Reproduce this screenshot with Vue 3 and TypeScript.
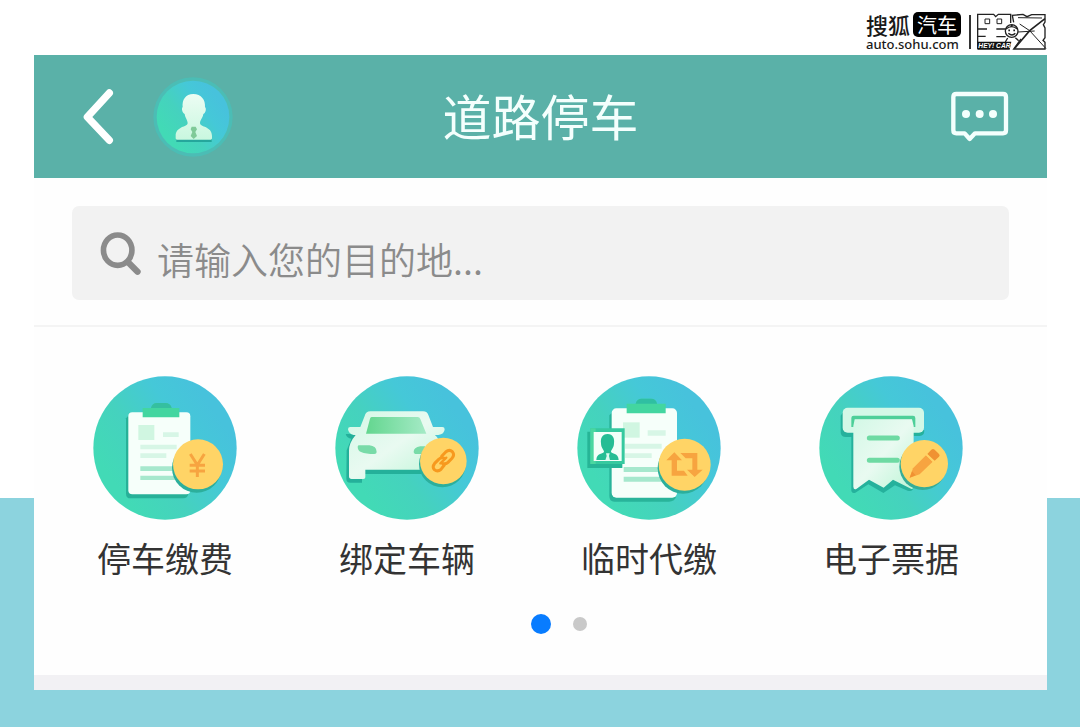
<script setup lang="ts">
import { ref } from 'vue'

type ServiceKind = 'pay' | 'bind' | 'proxy' | 'ticket'

interface Service {
  kind: ServiceKind
  label: string
  viewBox: string
}

const services: Service[] = [
  { kind: 'pay', label: '停车缴费', viewBox: '39 33 432 432' },
  { kind: 'bind', label: '绑定车辆', viewBox: '30 33 432 432' },
  { kind: 'proxy', label: '临时代缴', viewBox: '37 33 432 432' },
  { kind: 'ticket', label: '电子票据', viewBox: '42 33 432 432' },
]

const destination = ref('')
const activePage = ref(0)
</script>

<template>
  <div class="page">
    <svg class="defs" aria-hidden="true">
      <defs>
        <linearGradient id="disc" x1="0.15" y1="0.75" x2="0.85" y2="0.25">
          <stop offset="0" stop-color="#42dab6" />
          <stop offset="0.35" stop-color="#45d2be" />
          <stop offset="0.72" stop-color="#45c8d8" />
          <stop offset="1" stop-color="#47c2dc" />
        </linearGradient>
        <linearGradient id="mint" x1="0" y1="0" x2="0" y2="1">
          <stop offset="0" stop-color="#ecfdf3" />
          <stop offset="1" stop-color="#c9f7df" />
        </linearGradient>
        <linearGradient id="pale" x1="0" y1="0" x2="1" y2="1">
          <stop offset="0" stop-color="#d3f8e6" />
          <stop offset="0.5" stop-color="#e9faf1" />
          <stop offset="1" stop-color="#bdf5d6" />
        </linearGradient>
        <linearGradient id="glass" x1="0" y1="0" x2="1" y2="0">
          <stop offset="0" stop-color="#63d68f" />
          <stop offset="1" stop-color="#a5eac6" />
        </linearGradient>
      </defs>
    </svg>

    <div class="brand">
      <a class="sohu" href="#">
        <span class="sohu-name">搜狐<b class="sohu-auto">汽车</b></span>
        <span class="sohu-url">auto.sohu.com</span>
      </a>
      <span class="brand-rule"></span>
      <svg class="heycar" viewBox="354 20 210 117" role="img" aria-label="HEY! CAR">
        <g fill="none" stroke="#222" stroke-width="4">
          <path d="M356 132V27h48l6 7 8-7h37v26M356 71h28M356 93h24M412 71h28M412 94h28" />
          <path d="M378 41h14v14h-14zM414 41h14v14h-14z" stroke-width="3" />
          <path d="M464 51l-4-21 32-3 12 7 14-6h40v22l-5 8 5 10v29l-6 8 6 6v20H464l22-30" />
          <path d="M477 37l72 1M482 56l30 20 49 54M477 80l50-3" stroke-width="3" />
          <path d="M558 40l-46 36-46 54" stroke-width="5" />
          <circle cx="458" cy="77" r="19" fill="#fff" />
          <path d="M441 71q17-14 34 0M448 84q11 10 21 0M446 98l-7 12M469 97l10 9" />
          <path d="M448 75h5M463 75h5M456 64l4-6" stroke-width="5" />
        </g>
        <path d="M356 109h101l-5 24h-96z" fill="#111" />
        <text x="358" y="129" class="heycar-text">HEY! CAR</text>
      </svg>
    </div>

    <main class="card">
      <header class="bar">
        <div class="bar-side bar-start">
          <button class="icon-button" type="button" aria-label="返回">
            <svg class="back" viewBox="156 114 96 180">
              <path d="M238 132L172 204L238 274" fill="none" stroke="#fff" stroke-width="22" stroke-linecap="round" stroke-linejoin="round" />
            </svg>
          </button>
          <button class="icon-button" type="button" aria-label="个人中心">
            <svg class="avatar" viewBox="370 80 240 240">
              <circle cx="490" cy="200" r="119" fill="#4bbdb5" />
              <circle cx="490" cy="200" r="109" fill="url(#disc)" />
              <path d="M440 265h106v10H440z" fill="#25a79c" />
              <path d="M491 131c-24 0-34 18-32 39-5 5 0 19 6 21 2 13 8 17 9 27 0 13-36 9-36 39v7q0 4 4 4h101q4 0 4-4v-7c0-30-36-26-36-39 1-10 8-14 10-27 7-2 10-17 5-21 2-21-11-39-35-39z" fill="url(#mint)" />
              <path d="M486 229h12l4 8-5 8 5 12-10 9-9-9 5-12-5-8z" fill="#7fca98" />
            </svg>
          </button>
        </div>
        <h1 class="title">道路停车</h1>
        <div class="bar-side bar-end">
          <button class="icon-button" type="button" aria-label="消息">
            <svg class="chat" viewBox="64 65 174 153">
              <path d="M80 74H220Q229 74 229 83V183Q229 192 220 192H136L120 209L105 192H80Q71 192 71 183V83Q71 74 80 74Z" fill="none" stroke="#f4fffd" stroke-width="13" stroke-linejoin="round" />
              <g fill="#f4fffd">
                <circle cx="109" cy="134" r="12" />
                <circle cx="150" cy="134" r="12" />
                <circle cx="190" cy="134" r="12" />
              </g>
            </svg>
          </button>
        </div>
      </header>

      <form class="search-area" role="search" @submit.prevent>
        <label class="search">
          <svg class="lens" viewBox="120 102 126 136" aria-hidden="true">
            <ellipse cx="173" cy="160" rx="43" ry="46" fill="none" stroke="#8b8b8b" stroke-width="17" />
            <path d="M206 198L233 225" stroke="#8b8b8b" stroke-width="19" stroke-linecap="round" />
          </svg>
          <input v-model="destination" type="text" class="search-input" placeholder="请输入您的目的地..." aria-label="目的地" />
        </label>
      </form>

      <nav class="services" aria-label="停车服务">
        <a v-for="service in services" :key="service.kind" class="service" href="#">
          <svg class="service-icon" :viewBox="service.viewBox" aria-hidden="true">
            <template v-if="service.kind === 'pay'">
              <circle cx="255" cy="249" r="215" fill="url(#disc)" />
              <path d="M145 152l-7 8v226q0 14 14 14h158q12 0 15-13z" fill="#27b198" />
              <rect x="145" y="142" width="186" height="246" rx="12" fill="#f6fffa" />
              <path d="M188 157v-28h25q4-15 18-15h24q16 0 20 15h23v28z" fill="#43d6a0" />
              <path d="M213 129q4-15 18-15h24q16 0 20 15z" fill="#35bfa0" />
              <path d="M175 180h48v45h-48z" fill="#d0f6e1" />
              <path d="M249 202h47v14h-47zM181 239h109v14H181zM181 265h78v14h-78z" fill="#d7f6e6" />
              <path d="M181 304h110v14H181zM181 332h110v13H181z" fill="#a6e8cd" />
              <circle cx="350" cy="309" r="74" fill="#2caf9c" />
              <circle cx="354" cy="298" r="75" fill="#ffd466" />
              <path d="M331 267l21 33 21-33M352 300v36M329 301h46M329 318h46" fill="none" stroke="#f7a440" stroke-width="9" />
            </template>

            <template v-else-if="service.kind === 'bind'">
              <circle cx="246" cy="249" r="215" fill="url(#disc)" />
              <path d="M62 207q4 13 17 14l-14 35-1 85q0 12 12 12h35V327h220V210z" fill="#24b09a" />
              <path d="M119 153q3-14 17-14h158q13 0 17 13l13 34h28q7 0 7 7-1 15-19 17h-10q15 13 15 34v70H121v23q0 5-6 5H80q-8 0-8-8v-77q0-24 20-47h-6q-15-3-17-17 0-7 7-7h30z" fill="url(#pale)" />
              <path d="M140 156h138q6 0 8 6l18 44H123l12-45q1-5 5-5z" fill="url(#glass)" />
              <path d="M98 245q0-4 5-4h30q22 2 22 20 0 6-7 6-25 0-40-6-10-4-10-16zM266 260q0-12 20-16h14v23h-25q-9 0-9-7z" fill="#78dba8" />
              <circle cx="352" cy="297" r="70" fill="#2caf9c" />
              <circle cx="355" cy="288" r="70" fill="#ffd466" />
              <g fill="none" stroke="#f7991e" stroke-width="9" stroke-linecap="round">
                <path d="M350 274l12-13q11-9 20-1 8 10-1 20l-12 12q-8 7-17 3" />
                <path d="M358 300l-10 13q-10 9-20 1-7-9 1-19l12-12q8-7 17-3" />
                <path d="M346 295l18-17" stroke-width="7" />
              </g>
            </template>

            <template v-else-if="service.kind === 'proxy'">
              <circle cx="253" cy="249" r="215" fill="url(#disc)" />
              <path d="M141 144l-7 7v242q0 17 15 17h164q16 0 21-14z" fill="#29b49a" />
              <rect x="141" y="130" width="196" height="268" rx="14" fill="#f6fffa" />
              <path d="M186 145v-29h27q4-15 18-15h28q15 0 18 15h26v29z" fill="#43d6a0" />
              <path d="M213 116q4-15 18-15h28q15 0 18 15z" fill="#2fbfa2" />
              <path d="M175 172h50v46h-50z" fill="#d0f6e1" />
              <path d="M249 196h54v16h-54zM181 236h110v15H181zM181 265h80v14h-80z" fill="#d7f6e6" />
              <path d="M177 306h114v15H177zM177 335h114v15H177z" fill="#a6e8cd" />
              <path d="M68 200h105v109H68z" fill="#26b596" />
              <path d="M77 190h103v107H77z" fill="#36c99f" />
              <path d="M77 190h16v107H77z" fill="#4ad7a0" />
              <path d="M87 201h84v87H87z" fill="#f1fff8" />
              <path d="M129 207c-17 0-22 14-20 28 0 14 8 18 9 25-1 8-23 2-23 25h67c0-23-22-17-23-25 1-7 9-11 9-25 2-14-3-28-19-28z" fill="#25bd94" />
              <path d="M124 265h11l-2 8 3 13h-14l4-13z" fill="#d9fbee" />
              <circle cx="355" cy="310" r="76" fill="#2caf9c" />
              <circle cx="360" cy="299" r="78" fill="#ffd466" />
              <path d="M329 262l23 24h-15v31h21l11 15h-48v-46h-16zM347 264h51v50h16l-24 22-23-22h16v-34h-20z" fill="#f7a440" />
            </template>

            <template v-else>
              <circle cx="258" cy="249" r="215" fill="url(#disc)" />
              <path d="M113 143l-6 9v50q0 14 16 14h16v162q2 8 12 5l39-25 45 26 35-23 38 16q16 5 17-10V213h19q14 0 14-17z" fill="#25b19c" />
              <rect x="113" y="128" width="244" height="75" rx="15" fill="#d3f8e7" />
              <path d="M139 186v-27q0-7 7-7h178q7 0 7 7v27h-11v-22H150v22z" fill="#4dcf99" />
              <path d="M149 163h172l5 20v184q-3 8-11 3l-51-26-28 24-44-24-37 27q-9 5-10-6V183z" fill="url(#pale)" />
              <path d="M193 219h84M193 286h84" stroke="#6edaa3" stroke-width="15" stroke-linecap="round" />
              <circle cx="353" cy="305" r="70" fill="#36ad97" />
              <circle cx="358" cy="296" r="71" fill="#ffd466" />
              <path d="M314 338l10-28 39-39 20 19-39 38z" fill="#f7a440" />
              <path d="M314 338l7-19 11 12zM367 267l12-13q5-4 10 0l13 13q4 5 0 8l-13 12z" fill="#f09232" />
              <path d="M365 269l22 22" stroke="#ffd466" stroke-width="4" />
            </template>
          </svg>
          <span class="service-label">{{ service.label }}</span>
        </a>
      </nav>

      <div class="dots">
        <button
          v-for="page in 2"
          :key="page"
          type="button"
          class="dot"
          :class="{ active: activePage === page - 1 }"
          :aria-label="`第${page}页`"
          @click="activePage = page - 1"
        ></button>
      </div>
      <div class="section-gap"></div>
    </main>
  </div>
</template>

<style>
body {
  margin: 0;
}
</style>

<style scoped>
.page {
  box-sizing: border-box;
  min-height: 100vh;
  padding: 0 33px 37px 34px;
  background: linear-gradient(#fff 498px, #8cd3de 498px);
  font-family: "Noto Sans CJK SC", "Liberation Sans", sans-serif;
}

.defs {
  position: absolute;
  width: 0;
  height: 0;
}

.brand {
  display: flex;
  justify-content: flex-end;
  align-items: flex-end;
  height: 55px;
  box-sizing: border-box;
  padding-bottom: 4px;
}

.sohu {
  display: flex;
  flex-direction: column;
  color: #1a1a1a;
  text-decoration: none;
}

.sohu-name {
  display: flex;
  align-items: center;
  gap: 3px;
  font-size: 22px;
  font-weight: 500;
  line-height: 25px;
}

.sohu-auto {
  padding: 0 4px;
  border-radius: 5px;
  background: #000;
  color: #fff;
  font-size: 20px;
  font-weight: 400;
}

.sohu-url {
  font-family: "Noto Sans", sans-serif;
  font-size: 13px;
  font-weight: 500;
  line-height: 14px;
}

.brand-rule {
  width: 2px;
  height: 34px;
  margin: 0 6px 2px 8px;
  background: #333;
}

.heycar {
  width: 70px;
  height: 39px;
}

.heycar-text {
  fill: #fff;
  font-family: "Liberation Sans", sans-serif;
  font-size: 20px;
  font-style: italic;
  font-weight: 700;
}

.card {
  background: #fefefe;
}

.bar {
  display: grid;
  grid-template-columns: 1fr auto 1fr;
  align-items: center;
  height: 123px;
  padding: 0 38px;
  background: #5ab1a8;
}

.bar-side {
  display: flex;
  align-items: center;
  gap: 39px;
}

.bar-start {
  padding-left: 10px;
}

.bar-end {
  justify-content: flex-end;
}

.icon-button {
  display: block;
  padding: 0;
  border: 0;
  background: none;
  cursor: pointer;
}

.icon-button svg {
  display: block;
}

.back {
  width: 32px;
  height: 60px;
}

.avatar {
  width: 80px;
  height: 80px;
}

.chat {
  width: 58px;
  height: 51px;
}

.title {
  margin: 0;
  padding-bottom: 4px;
  color: #f4fffd;
  font-size: 49px;
  font-weight: 400;
  line-height: 72px;
}

.search-area {
  padding: 28px 38px 25px;
  border-bottom: 2px solid #f4f4f4;
}

.search {
  display: flex;
  align-items: center;
  gap: 15px;
  height: 94px;
  padding: 0 28px;
  border-radius: 7px;
  background: #f2f2f2;
}

.lens {
  flex: none;
  width: 42px;
  height: 45px;
}

.search-input {
  flex: 1;
  min-width: 0;
  padding: 12px 0 0;
  border: 0;
  outline: 0;
  background: none;
  color: #555;
  font-family: inherit;
  font-size: 37px;
  font-weight: 350;
  line-height: 54px;
}

.search-input::placeholder {
  color: #8b8b8b;
  opacity: 1;
}

.services {
  display: grid;
  grid-template-columns: repeat(4, 1fr);
  padding: 49px 35px 0 10px;
}

.service {
  display: flex;
  flex-direction: column;
  align-items: center;
  gap: 14px;
  color: #333;
  text-decoration: none;
}

.service-icon {
  width: 144px;
  height: 144px;
}

.service-label {
  font-size: 34px;
  line-height: 48px;
}

.dots {
  display: flex;
  justify-content: center;
  align-items: center;
  gap: 22px;
  height: 20px;
  padding: 32px 0 41px 36px;
}

.dot {
  width: 14px;
  height: 14px;
  padding: 0;
  border: 0;
  border-radius: 50%;
  background: #c9c9c9;
  cursor: pointer;
}

.dot.active {
  width: 20px;
  height: 20px;
  background: #087cff;
}

.section-gap {
  height: 15px;
  background: #f2f1f4;
}
</style>
